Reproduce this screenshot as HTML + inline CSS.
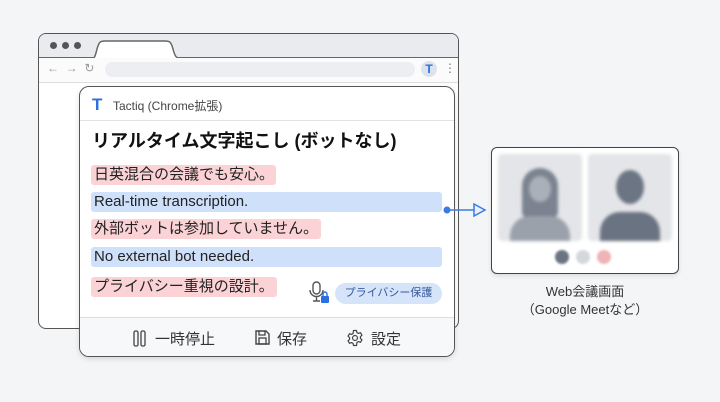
<!DOCTYPE html>
<html><head><meta charset="utf-8"><style>
*{box-sizing:border-box;margin:0;padding:0}
body{width:720px;height:402px;background:#f3f5f7;position:relative;overflow:hidden;font-family:"Liberation Sans","Noto Sans CJK JP",sans-serif;color:#222}
.abs{position:absolute}
.win{left:38px;top:33px;width:421px;height:296px;border:1.5px solid #555;border-radius:8px;background:#fff;overflow:hidden}
.tabbar{left:0;top:0;width:100%;height:24px;background:#e9ebee;border-bottom:1.5px solid #666}
.dot{width:7px;height:7px;border-radius:50%;background:#555;top:8px}
.tool{left:0;top:24px;width:100%;height:25px;border-bottom:1px solid #ddd;background:#fbfbfc}
.addr{left:66px;top:4px;width:310px;height:15px;border-radius:8px;background:#eceef1}
.pop{left:79px;top:86px;width:376px;height:271px;border:1.5px solid #555;border-radius:10px;background:#fff;overflow:hidden;box-shadow:0 2px 6px rgba(0,0,0,.12)}
.row{left:11px;height:20px;border-radius:3px;font-size:15px;line-height:20px;padding-left:3px}
.pk{background:#fbd3d6}.bl{background:#cfe0fa}
.foot{left:0;top:230px;width:100%;height:42px;background:#f7f8f9;border-top:1px solid #ddd;font-size:15px;color:#333}
.card{left:491px;top:147px;width:188px;height:127px;border:1.5px solid #444;border-radius:6px;background:#fff;box-shadow:0 2px 5px rgba(0,0,0,.1)}
.ph{top:6px;width:84px;height:87px;background:#e3e5e8;border-radius:4px;overflow:hidden}
</style></head><body>
<div class="abs win">
 <div class="abs tabbar">
  <div class="abs dot" style="left:11px"></div><div class="abs dot" style="left:23px"></div><div class="abs dot" style="left:35px"></div>
  <svg class="abs" style="left:50px;top:5px" width="100" height="21"><path d="M0 20C6 20 6 18 8 10C10 3 11 2 16 2H76C81 2 82 3 84 10C86 18 87 20 96 20" fill="#fff" stroke="#666" stroke-width="1.5"/></svg>
 </div>
 <div class="abs tool">
  <div class="abs" style="left:8px;top:3px;font-size:12px;color:#999">←&nbsp;&nbsp;→&nbsp;&nbsp;↻</div>
  <div class="abs addr"></div>
  <div class="abs" style="left:382px;top:3px;width:16px;height:16px;border-radius:50%;background:#dde3ec;color:#2c6fe0;font-weight:bold;font-size:12px;text-align:center;line-height:16px">T</div>
  <div class="abs" style="left:405px;top:3px;font-size:12px;color:#777">⋮</div>
 </div>
</div>
<div class="abs pop">
 <div class="abs" style="left:12px;top:8px;color:#2c6fe0;font-weight:bold;font-size:17px">T</div>
 <div class="abs" style="left:33px;top:10px;font-size:12px;color:#444">Tactiq (Chrome拡張)</div>
 <div class="abs" style="left:0;top:33px;width:100%;border-top:1px solid #e2e2e2"></div>
 <div class="abs" style="left:12px;top:40px;font-size:18px;font-weight:bold;color:#111">リアルタイム文字起こし (ボットなし)</div>
 <div class="abs row pk" style="top:78px;width:185px">日英混合の会議でも安心。</div>
 <div class="abs row bl" style="top:105px;width:351px">Real-time transcription.</div>
 <div class="abs row pk" style="top:132px;width:230px">外部ボットは参加していません。</div>
 <div class="abs row bl" style="top:160px;width:351px">No external bot needed.</div>
 <div class="abs row pk" style="top:190px;width:186px">プライバシー重視の設計。</div>
 <svg class="abs" style="left:228px;top:194px" width="28" height="24"><rect x="5" y="1" width="7" height="12" rx="3.5" fill="none" stroke="#555" stroke-width="1.4"/><path d="M2 9a6.5 6.5 0 0 0 13 0M8.5 16v4M5 20h7" stroke="#555" stroke-width="1.4" fill="none"/><rect x="13" y="15" width="8" height="7" rx="1" fill="#2c6fe0"/><path d="M15 15v-2a2 2 0 0 1 4 0v2" stroke="#2c6fe0" stroke-width="1.4" fill="none"/></svg>
 <div class="abs" style="left:255px;top:196px;width:107px;height:21px;border-radius:11px;background:#d6e4fa;color:#35599a;font-size:11px;line-height:21px;text-align:center">プライバシー保護</div>
 <div class="abs foot">
  <svg class="abs" style="left:53px;top:12px" width="14" height="17"><rect x="1" y="1" width="4" height="15" rx="1.5" fill="none" stroke="#444" stroke-width="1.3"/><rect x="8" y="1" width="4" height="15" rx="1.5" fill="none" stroke="#444" stroke-width="1.3"/></svg>
  <div class="abs" style="left:75px;top:10px">一時停止</div>
  <svg class="abs" style="left:174px;top:11px" width="17" height="17"><path d="M2 2h10l3 3v10H2z" fill="none" stroke="#444" stroke-width="1.4"/><rect x="5" y="9" width="7" height="6" fill="none" stroke="#444" stroke-width="1.3"/><path d="M5 2v4h6V2" fill="none" stroke="#444" stroke-width="1.3"/></svg>
  <div class="abs" style="left:197px;top:10px">保存</div>
  <svg class="abs" style="left:266px;top:11px" width="18" height="18" viewBox="0 0 24 24"><path d="M10 2h4l.6 2.8 2 1.1 2.7-1 2 3.4-2.1 1.9v2.3l2.1 1.9-2 3.4-2.7-1-2 1.1L14 22h-4l-.6-2.8-2-1.1-2.7 1-2-3.4 2.1-1.9V11.5L2.7 9.6l2-3.4 2.7 1 2-1.1z" fill="none" stroke="#444" stroke-width="1.6" stroke-linejoin="round"/><circle cx="12" cy="12" r="3.3" fill="none" stroke="#444" stroke-width="1.6"/></svg>
  <div class="abs" style="left:291px;top:10px">設定</div>
 </div>
</div>
<svg class="abs" style="left:440px;top:200px" width="50" height="20"><circle cx="7" cy="10" r="3.5" fill="#3a7ce6"/><path d="M7 10h27" stroke="#3a7ce6" stroke-width="1.5"/><path d="M34 4l11 6-11 6z" fill="#eaf1fd" stroke="#3a7ce6" stroke-width="1.5"/></svg>
<div class="abs card">
 <div class="abs ph" style="left:6px;filter:blur(1.5px)">
  <div class="abs" style="left:24px;top:14px;width:36px;height:50px;border-radius:18px 18px 6px 6px;background:#7b8391"></div>
  <div class="abs" style="left:31px;top:22px;width:22px;height:26px;border-radius:50%;background:#aab0b9"></div>
  <div class="abs" style="left:12px;top:62px;width:60px;height:40px;border-radius:20px 20px 0 0;background:#9aa1ab"></div>
 </div>
 <div class="abs ph" style="left:96px;filter:blur(1.5px)">
  <div class="abs" style="left:28px;top:16px;width:28px;height:34px;border-radius:50%;background:#6c7583"></div>
  <div class="abs" style="left:12px;top:58px;width:60px;height:40px;border-radius:20px 20px 0 0;background:#6a7381"></div>
 </div>
 <div class="abs" style="left:63px;top:102px;width:14px;height:14px;border-radius:50%;background:#6b7482;filter:blur(1px)"></div>
 <div class="abs" style="left:84px;top:102px;width:14px;height:14px;border-radius:50%;background:#d4d7dc;filter:blur(1px)"></div>
 <div class="abs" style="left:105px;top:102px;width:14px;height:14px;border-radius:50%;background:#eeb4b6;filter:blur(1px)"></div>
</div>
<div class="abs" style="left:485px;top:283px;width:200px;text-align:center;font-size:13px;line-height:18px;color:#333">Web会議画面<br>（Google Meetなど）</div>
</body></html>
